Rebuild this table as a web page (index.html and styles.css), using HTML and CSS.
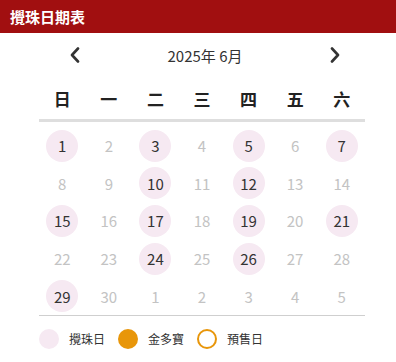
FILE: index.html
```html
<!DOCTYPE html>
<html lang="zh-Hant">
<head>
<meta charset="utf-8">
<title>攪珠日期表</title>
<link rel="stylesheet" href="styles.css">
</head>
<body>
<header class="bar">攪珠日期表</header>
<section class="cal">
  <div class="nav">
    <button class="arrow" aria-label="上一月">
      <svg width="12" height="16" viewBox="0 0 12 16"><path d="M9 1.5 L3 8 L9 14.5" fill="none" stroke="#333" stroke-width="2.6" stroke-linecap="round" stroke-linejoin="round"/></svg>
    </button>
    <div class="month">2025年 6月</div>
    <button class="arrow" aria-label="下一月">
      <svg width="12" height="16" viewBox="0 0 12 16"><path d="M3 1.5 L9 8 L3 14.5" fill="none" stroke="#333" stroke-width="2.6" stroke-linecap="round" stroke-linejoin="round"/></svg>
    </button>
  </div>
  <div class="grid week">
    <div>日</div><div>一</div><div>二</div><div>三</div><div>四</div><div>五</div><div>六</div>
  </div>
  <div class="grid days">
    <div class="d on"><span>1</span></div><div class="d"><span>2</span></div><div class="d on"><span>3</span></div><div class="d"><span>4</span></div><div class="d on"><span>5</span></div><div class="d"><span>6</span></div><div class="d on"><span>7</span></div>
    <div class="d"><span>8</span></div><div class="d"><span>9</span></div><div class="d on"><span>10</span></div><div class="d"><span>11</span></div><div class="d on"><span>12</span></div><div class="d"><span>13</span></div><div class="d"><span>14</span></div>
    <div class="d on"><span>15</span></div><div class="d"><span>16</span></div><div class="d on"><span>17</span></div><div class="d"><span>18</span></div><div class="d on"><span>19</span></div><div class="d"><span>20</span></div><div class="d on"><span>21</span></div>
    <div class="d"><span>22</span></div><div class="d"><span>23</span></div><div class="d on"><span>24</span></div><div class="d"><span>25</span></div><div class="d on"><span>26</span></div><div class="d"><span>27</span></div><div class="d"><span>28</span></div>
    <div class="d on"><span>29</span></div><div class="d"><span>30</span></div><div class="d"><span>1</span></div><div class="d"><span>2</span></div><div class="d"><span>3</span></div><div class="d"><span>4</span></div><div class="d"><span>5</span></div>
  </div>
  <div class="legend">
    <div class="item"><i class="dot pink"></i>攪珠日</div>
    <div class="item"><i class="dot gold"></i>金多寶</div>
    <div class="item"><i class="dot ring"></i>預售日</div>
  </div>
</section>
</body>
</html>
```

FILE: styles.css
```css
* { box-sizing: border-box; }

body {
  margin: 0;
  background: #fff;
  font-family: "Noto Sans CJK TC", "Noto Sans", sans-serif;
  color: #333;
}

.bar {
  height: 33px;
  background: #a10f10;
  color: #fff;
  font-size: 15px;
  font-weight: 700;
  line-height: 33px;
  padding-left: 10px;
}

.cal {
  width: 326px;
  margin-left: 39px;
}

.nav {
  height: 44px;
  display: flex;
  align-items: center;
  justify-content: space-between;
  padding: 0 24px 0 30px;
}

.arrow {
  border: 0;
  background: none;
  padding: 0;
  width: 12px;
  height: 16px;
  display: flex;
}

.month {
  font-size: 15px;
  color: #333;
}

.grid {
  display: grid;
  grid-template-columns: repeat(7, 1fr);
  text-align: center;
}

.week {
  height: 45px;
  align-items: center;
  font-size: 17px;
  font-weight: 700;
  color: #222;
  border-bottom: 3px solid #dedede;
}

.days {
  padding-top: 5px;
  border-bottom: 1px solid #cfcfcf;
}

.d {
  height: 37.6px;
  display: flex;
  align-items: center;
  justify-content: center;
  font-size: 15px;
  color: #c3c3c3;
}

.d span {
  width: 32px;
  height: 32px;
  border-radius: 50%;
  display: flex;
  align-items: center;
  justify-content: center;
}

.d.on { color: #333; }
.d.on span { background: #f6e9f2; }

.legend {
  display: flex;
  align-items: center;
  gap: 13px;
  height: 46px;
  font-size: 12px;
  color: #333;
}

.item {
  display: flex;
  align-items: center;
  gap: 10px;
}

.dot {
  width: 20px;
  height: 20px;
  border-radius: 50%;
  display: block;
}

.dot.pink { background: #f6e9f2; }
.dot.gold { background: #e8960a; }
.dot.ring { border: 2px solid #e8960a; background: #fff; }
```
